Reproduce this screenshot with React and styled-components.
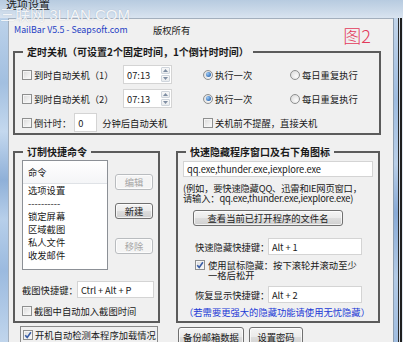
import React from 'react';
import styled, { createGlobalStyle } from 'styled-components';

const GlobalStyle = createGlobalStyle`
  html, body {
    margin: 0;
    padding: 0;
  }
  body {
    width: 403px;
    height: 342px;
    overflow: hidden;
    background: #fff;
    color: #1a1a1a;
    font-family: "Noto Sans CJK SC", "Liberation Sans", sans-serif;
    font-size: 9.3px;
  }
  * { box-sizing: border-box; }
`;

const Check = ({ checked }) => (
  <Box>
    {checked && (
      <svg width="8" height="8" viewBox="0 0 8 8">
        <path d="M1.2 4.2 L3.2 6.4 L6.9 1.2" fill="none" stroke="#3a5ea6" strokeWidth="1.6" />
      </svg>
    )}
  </Box>
);

const CheckItem = ({ checked, children }) => (
  <CheckLabel>
    <Check checked={checked} />
    <span>{children}</span>
  </CheckLabel>
);

const Radio = ({ on, children }) => (
  <CheckLabel>
    <RadioDot $on={on} />
    <span>{children}</span>
  </CheckLabel>
);

const TimeBox = ({ value }) => (
  <TimeInput>
    <span>{value}</span>
    <Spin>
      <SpinHalf>
        <svg width="5" height="3" viewBox="0 0 5 3"><polygon points="0,3 2.5,0 5,3" fill="#7f8ea3" /></svg>
      </SpinHalf>
      <SpinHalf>
        <svg width="5" height="3" viewBox="0 0 5 3"><polygon points="0,0 2.5,3 5,0" fill="#7f8ea3" /></svg>
      </SpinHalf>
    </Spin>
  </TimeInput>
);

const commands = ['选项设置', '----------', '锁定屏幕', '区域截图', '私人文件', '收发邮件'];

const App = () => (
  <Window>
    <GlobalStyle />
    <TitleBar>选项设置</TitleBar>
    <Watermark>三联网 3LIAN.COM</Watermark>
    <Body>
      <LeftFrame />
      <Client>
        <HeaderRow>
          <Brand>MailBar V5.5 - Seapsoft.com</Brand>
          <span>版权所有</span>
          <Figure>图2</Figure>
        </HeaderRow>

        <Group>
          <Legend>定时关机（可设置2个固定时间，1个倒计时时间）</Legend>
          <TimerGrid>
            <CheckItem>到时自动关机（1）</CheckItem>
            <TimeBox value="07:13" />
            <span />
            <Radio on>执行一次</Radio>
            <Radio>每日重复执行</Radio>

            <CheckItem>到时自动关机（2）</CheckItem>
            <TimeBox value="07:13" />
            <span />
            <Radio on>执行一次</Radio>
            <Radio>每日重复执行</Radio>

            <CountdownCell>
              <Check />
              <span>倒计时：</span>
              <Field $w={23} $h={19}>0</Field>
              <span>分钟后自动关机</span>
            </CountdownCell>
            <WideCell>
              <CheckItem>关机前不提醒，直接关机</CheckItem>
            </WideCell>
          </TimerGrid>
        </Group>

        <Columns>
          <Group $w={147}>
            <Legend>订制快捷命令</Legend>
            <LeftInner>
              <ListRow>
                <ListBox>
                  <ListHeader>命令</ListHeader>
                  {commands.map((c) => (
                    <ListItem key={c}>{c}</ListItem>
                  ))}
                </ListBox>
                <ButtonColumn>
                  <SmallButton disabled $top={14}>编辑</SmallButton>
                  <SmallButton $top={13}>新建</SmallButton>
                  <SmallButton disabled $top={19}>移除</SmallButton>
                </ButtonColumn>
              </ListRow>
              <FormRow $top={11}>
                <Label $w={55}>截图快捷键：</Label>
                <Field $w={77} $h={17}>Ctrl + Alt + P</Field>
              </FormRow>
              <CheckRow>
                <CheckItem>截图中自动加入截图时间</CheckItem>
              </CheckRow>
            </LeftInner>
          </Group>

          <Group $w={204}>
            <Legend>快速隐藏程序窗口及右下角图标</Legend>
            <RightInner>
              <Field $w={190} $h={16}>qq.exe,thunder.exe,iexplore.exe</Field>
              <Help>
                (例如，要快速隐藏QQ、迅雷和IE网页窗口，
                <br />
                请输入：qq.exe,thunder.exe,iexplore.exe)
              </Help>
              <WideButton>查看当前已打开程序的文件名</WideButton>
              <FormRow $top={12} $left={12}>
                <Label $w={73}>快速隐藏快捷键：</Label>
                <Field $w={94} $h={17}>Alt + 1</Field>
              </FormRow>
              <MouseRow>
                <Check checked />
                <span>
                  使用鼠标隐藏：按下滚轮并滚动至少
                  <br />
                  一格后松开
                </span>
              </MouseRow>
              <FormRow $top={6} $left={12}>
                <Label $w={73}>恢复显示快捷键：</Label>
                <Field $w={94} $h={17}>Alt + 2</Field>
              </FormRow>
              <Note>（若需要更强大的隐藏功能请使用无忧隐藏）</Note>
            </RightInner>
          </Group>
        </Columns>

        <BottomRow>
          <FocusBox>
            <CheckItem checked>开机自动检测本程序加载情况</CheckItem>
          </FocusBox>
          <BottomButtons>
            <SmallButton $w={66} $h={20}>备份邮箱数据</SmallButton>
            <SmallButton $w={54} $h={20}>设置密码</SmallButton>
          </BottomButtons>
        </BottomRow>
      </Client>
      <RightFrame />
    </Body>
  </Window>
);

export default App;

const Window = styled.div`
  position: relative;
  width: 403px;
  height: 342px;
  display: flex;
  flex-direction: column;
  overflow: hidden;
`;

const TitleBar = styled.div`
  height: 18px;
  flex: none;
  padding-left: 6px;
  font-size: 11px;
  line-height: 9px;
  color: #222;
  background: linear-gradient(180deg, #b7cbe0 0%, #c9d8e8 55%, #d9e4f0 100%);
`;

const Watermark = styled.div`
  position: absolute;
  left: 0;
  top: 7px;
  font-family: "Liberation Sans", "Noto Sans CJK SC", sans-serif;
  font-size: 15px;
  line-height: 15px;
  color: rgba(255, 255, 255, 0.9);
  text-shadow: 0 0 1px rgba(90, 110, 140, 0.45);
  white-space: nowrap;
  pointer-events: none;
`;

const Body = styled.div`
  flex: 1;
  display: flex;
  min-height: 0;
`;

const LeftFrame = styled.div`
  width: 8px;
  flex: none;
  background: linear-gradient(
    180deg,
    #bcd2ea 0%,
    #a2bfe0 20%,
    #c4d8ee 35%,
    #8fb0d8 50%,
    #b7cfea 62%,
    #9bbadf 78%,
    #c0d5ec 100%
  );
`;

const RightFrame = styled.div`
  width: 10px;
  flex: none;
  border-left: 1px solid #8c9db0;
  background: linear-gradient(
    180deg,
    #c2d5ea 0%,
    #9ebce0 25%,
    #b9cfe8 45%,
    #88aad6 60%,
    #b3cbe6 80%,
    #a0bde0 100%
  );
  box-shadow: inset -1px 0 0 #dfe7f0, inset -3px 0 0 #1e1e1e, inset -4px 0 0 #d3deea,
    inset -5px 0 0 #2a2a2a;
`;

const Client = styled.div`
  flex: 1;
  display: flex;
  flex-direction: column;
  background: #f0f0f0;
  border-top: 1px solid #a3afbd;
  border-left: 1px solid #a3afbd;
  padding: 0 12px 0 4px;
`;

const HeaderRow = styled.div`
  height: 26px;
  flex: none;
  display: flex;
  align-items: flex-start;
  line-height: 12px;
  & > span {
    margin-top: 5px;
  }
`;

const Brand = styled.div`
  width: 139px;
  margin: 5px 0 0 1px;
  color: #1f40c4;
  font-size: 8.8px;
`;

const Figure = styled.div`
  margin: 7px 10px 0 auto;
  font-size: 18px;
  line-height: 18px;
  font-weight: 300;
  color: #e23b5b;
`;

const Group = styled.fieldset`
  margin: 0;
  padding: 0;
  min-width: 0;
  width: ${(p) => (p.$w ? `${p.$w}px` : 'auto')};
  border: 2px solid #5b5b5b;
`;

const Legend = styled.legend`
  margin-left: 8px;
  padding: 0 4px;
  font-size: 10px;
  font-weight: 700;
  line-height: 14px;
  color: #1a1a1a;
`;

const TimerGrid = styled.div`
  display: grid;
  grid-template-columns: 101px 49px 31px 87px auto;
  grid-auto-rows: 19px;
  row-gap: 5px;
  align-items: center;
  padding: 6px 0 1px 7px;
`;

const CountdownCell = styled.div`
  grid-column: 1 / 4;
  display: flex;
  align-items: center;
  height: 19px;
  & > span:nth-child(2) {
    margin: 0 3px 0 2px;
  }
  & > span:last-child {
    margin-left: 5px;
  }
`;

const WideCell = styled.div`
  grid-column: 4 / 6;
`;

const CheckLabel = styled.label`
  display: flex;
  align-items: center;
  gap: 2px;
  white-space: nowrap;
  line-height: 12px;
`;

const Box = styled.span`
  width: 10px;
  height: 10px;
  flex: none;
  display: inline-flex;
  align-items: center;
  justify-content: center;
  border: 1px solid #8e8f8f;
  background: linear-gradient(135deg, #d9d9d9 0%, #f2f2f2 70%, #fbfbfb 100%);
  box-shadow: inset 0 0 0 1px #f5f5f5;
`;

const RadioDot = styled.span`
  width: 10px;
  height: 10px;
  flex: none;
  border-radius: 50%;
  display: inline-flex;
  align-items: center;
  justify-content: center;
  border: 1px solid #8e8f8f;
  background: radial-gradient(circle at 65% 65%, #fbfbfb 0%, #d6d6d6 100%);
  &::after {
    content: '';
    width: 5px;
    height: 5px;
    border-radius: 50%;
    background: ${(p) =>
      p.$on ? 'radial-gradient(circle at 35% 35%, #9dcbf5 0%, #2a66b3 80%)' : 'transparent'};
  }
`;

const TimeInput = styled.div`
  height: 19px;
  width: 49px;
  display: flex;
  align-items: center;
  padding-left: 3px;
  background: #fff;
  border: 1px solid #d4d4d4;
  & > span:first-child {
    flex: 1;
    line-height: 12px;
  }
`;

const Spin = styled.span`
  width: 11px;
  align-self: stretch;
  display: flex;
  flex-direction: column;
  padding: 1px;
  gap: 1px;
`;

const SpinHalf = styled.span`
  flex: 1;
  display: flex;
  align-items: center;
  justify-content: center;
  border: 1px solid #cfd5dc;
  border-radius: 1px;
  background: linear-gradient(180deg, #f8f8f8, #e8ebee);
`;

const Field = styled.div`
  width: ${(p) => p.$w}px;
  height: ${(p) => p.$h}px;
  flex: none;
  display: flex;
  align-items: center;
  padding-left: 3px;
  background: #fff;
  border: 1px solid #d4d4d4;
  line-height: 12px;
  letter-spacing: -0.1px;
  white-space: nowrap;
  overflow: hidden;
`;

const Columns = styled.div`
  display: flex;
  gap: 16px;
  margin-top: 10px;
  height: 178px;
  flex: none;
`;

const LeftInner = styled.div`
  padding: 1px 0 0 7px;
`;

const ListRow = styled.div`
  display: flex;
  align-items: flex-start;
`;

const ListBox = styled.div`
  width: 86px;
  height: 110px;
  background: #fff;
  border: 1px solid #8c9096;
`;

const ListHeader = styled.div`
  height: 23px;
  padding: 5px 0 0 5px;
  line-height: 12px;
  background: linear-gradient(180deg, #ffffff 0%, #f4f5f7 100%);
  border-bottom: 1px solid #dfe2e6;
`;

const ListItem = styled.div`
  height: 13px;
  line-height: 13px;
  padding-left: 5px;
  white-space: nowrap;
`;

const ButtonColumn = styled.div`
  display: flex;
  flex-direction: column;
  margin-left: 7px;
`;

const SmallButton = styled.button`
  width: ${(p) => p.$w || 38}px;
  height: ${(p) => p.$h || 16}px;
  margin-top: ${(p) => p.$top || 0}px;
  padding: 0;
  font: inherit;
  line-height: 12px;
  color: ${(p) => (p.disabled ? '#a5a5a5' : '#1a1a1a')};
  border: 1px solid ${(p) => (p.disabled ? '#b9bcbf' : '#707070')};
  border-radius: 3px;
  background: ${(p) =>
    p.disabled
      ? '#f4f4f4'
      : 'linear-gradient(180deg, #f4f4f4 0%, #ebebeb 48%, #dddddd 52%, #cfcfcf 100%)'};
  box-shadow: inset 0 0 0 1px rgba(255, 255, 255, 0.7);
`;

const WideButton = styled(SmallButton)`
  width: 150px;
  margin: 7px 0 0 10px;
`;

const FormRow = styled.div`
  display: flex;
  align-items: center;
  margin-top: ${(p) => p.$top}px;
  margin-left: ${(p) => p.$left || 0}px;
`;

const Label = styled.span`
  width: ${(p) => p.$w}px;
  flex: none;
  white-space: nowrap;
  line-height: 12px;
`;

const CheckRow = styled.div`
  height: 14px;
  margin-top: 6px;
  display: flex;
  align-items: center;
`;

const RightInner = styled.div`
  display: flex;
  flex-direction: column;
  align-items: flex-start;
  padding: 2px 0 0 5px;
`;

const Help = styled.div`
  margin-top: 6px;
  line-height: 10px;
  letter-spacing: -0.2px;
  white-space: nowrap;
`;

const MouseRow = styled.div`
  display: flex;
  align-items: flex-start;
  gap: 3px;
  margin: 5px 0 0 12px;
  line-height: 10px;
`;

const Note = styled.div`
  margin: 3px 0 0 1px;
  line-height: 12px;
  color: #2038d6;
  white-space: nowrap;
`;

const BottomRow = styled.div`
  display: flex;
  align-items: flex-start;
  margin-top: 3px;
`;

const FocusBox = styled.div`
  margin-left: 7px;
  width: 138px;
  height: 20px;
  padding: 2px 0 0 2px;
  border: 1px solid #8a8a8a;
`;

const BottomButtons = styled.div`
  display: flex;
  gap: 5px;
  margin: 1px 0 0 20px;
`;
